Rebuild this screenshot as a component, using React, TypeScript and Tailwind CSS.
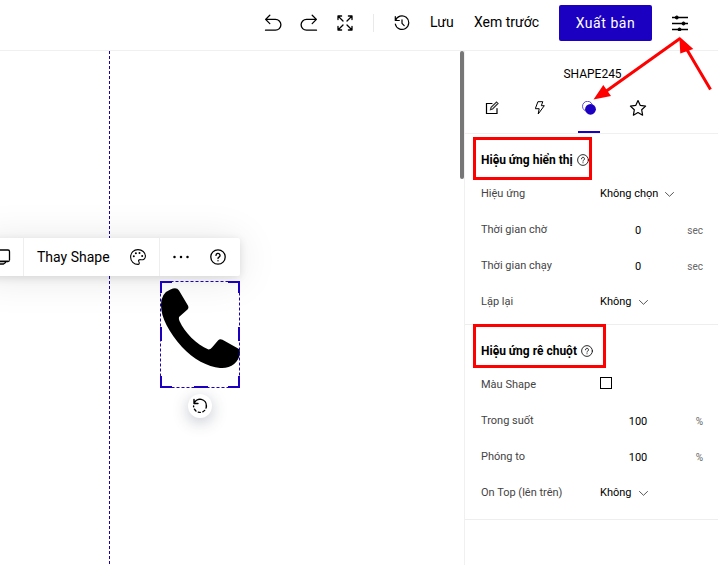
import React from "react";

const line = { fill: "none", stroke: "currentColor", strokeLinecap: "round", strokeLinejoin: "round" } as const;

function HelpIcon({ size, weight = 1.3 }: { size: number; weight?: number }) {
  return (
    <svg width={size} height={size} viewBox="0 0 16 16" {...line} strokeWidth={weight} className="shrink-0">
      <circle cx="8" cy="8" r="7.2" />
      <path d="M6 6.4a2 2 0 1 1 3 1.700c-.7.4-1 .7-1 1.400" />
      <path d="M8 11.600v.2" />
    </svg>
  );
}

function Chevron() {
  return (
    <svg width="9" height="5" viewBox="0 0 9 5" {...line} strokeWidth="0.9" className="mt-px shrink-0 text-[#444]">
      <path d="M.5.5l4 3.800 4-3.800" />
    </svg>
  );
}

function Header() {
  return (
    <header className="flex h-[51px] shrink-0 items-center border-b border-[#f0f0f0] pb-[4px] text-black">
      <svg width="18" height="18" viewBox="0 0 18 18" {...line} strokeWidth="1.300" className="ml-[264px] shrink-0">
        <path d="M5.800 1.200 1.600 5.400l4.200 4.200M1.800 5.400H11.500a5 5 0 0 1 0 10.800H1.500" />
      </svg>
      <svg width="18" height="18" viewBox="0 0 18 18" {...line} strokeWidth="1.300" className="ml-[18px] shrink-0">
        <path d="M12.200 1.200l4.200 4.200-4.200 4.200M16.200 5.400H6.500a5 5 0 0 0 0 10.800H16.500" />
      </svg>
      <svg width="16" height="16" viewBox="0 0 16 16" {...line} strokeWidth="1.300" className="ml-[19px] shrink-0">
        <path d="M1 4.600V1h3.600M1 1l5 5M11.400 1H15v3.600M15 1l-5 5M1 11.400V15h3.600M1 15l5-5M11.400 15H15v-3.600M15 15l-5-5" />
      </svg>
      <div className="ml-[20px] h-[18px] w-px bg-[#e9e9e9]" />
      <svg width="16" height="16" viewBox="0 0 16 16" {...line} strokeWidth="1.200" className="ml-[20px] shrink-0">
        <path d="M1.500 5.500A6.800 6.800 0 1 1 1.300 9M1.300 1.500v4h4M8 4.800v3.500l2.200 2.300" />
      </svg>
      <span className="ml-[20px] w-[44px] pb-[2px] text-[14px]">Lưu</span>
      <span className="w-[85px] pb-[2px] text-[14px] whitespace-nowrap">Xem trước</span>
      <button className="h-[36px] w-[93px] rounded-[2px] bg-[#1c00c2] text-[14px] tracking-[0.55px] whitespace-nowrap text-white">Xuất bản</button>
      <svg width="16" height="16" viewBox="0 0 16 16" className="ml-[20px] shrink-0" fill="currentColor" stroke="currentColor">
        <path d="M0 2.500h16M0 8.500h16M0 14.500h16" strokeWidth="1.300" />
        <circle cx="4.800" cy="2.500" r="1.500" />
        <circle cx="11.500" cy="8.500" r="1.500" />
        <circle cx="7.500" cy="14.500" r="1.500" />
      </svg>
    </header>
  );
}

function ShapeToolbar() {
  return (
    <div className="absolute top-[187px] left-[-20px] flex h-[38px] w-[260px] items-center rounded-[2px] bg-white shadow-[0_2px_8px_rgba(0,0,0,0.12),0_2px_40px_rgba(0,0,0,0.1)]">
      <svg width="20" height="18" viewBox="0 0 20 18" {...line} strokeWidth="1.300" className="ml-[11px] shrink-0">
        <rect x="1" y="2" width="17.500" height="11.500" rx="1.500" />
        <path d="M3 16h9.500l2-1.500" />
        <path d="M1 12.500h17" stroke="#888" strokeWidth="1" />
      </svg>
      <div className="ml-[12px] h-full w-px bg-[#eee]" />
      <span className="w-[93px] pl-[13px] text-[14px] whitespace-nowrap">Thay Shape</span>
      <svg width="16" height="16" viewBox="0 0 16 16" {...line} strokeWidth="1.100" className="ml-[13px] shrink-0">
        <path d="M8 15.400C3.900 15.400.6 12.300.6 8S3.900.6 8 .6s7.400 2.800 7.400 6.600c0 2.800-2.300 4-4.500 3.500-1.700-.4-2.800.5-2.100 1.900.8 1.400.5 2.800-.8 2.800Z" />
        <g fill="currentColor" stroke="none">
          <circle cx="3.800" cy="7.200" r="1" />
          <circle cx="5.900" cy="4.200" r="1" />
          <circle cx="9.500" cy="3.900" r="1" />
          <circle cx="12.200" cy="6.900" r="1" />
        </g>
      </svg>
      <div className="ml-[13px] h-full w-px bg-[#eee]" />
      <svg width="16" height="4" viewBox="0 0 16 4" className="ml-[13px] shrink-0" fill="currentColor">
        <circle cx="1.500" cy="2" r="1.250" /><circle cx="8" cy="2" r="1.250" /><circle cx="14.500" cy="2" r="1.250" />
      </svg>
      <span className="ml-[21px]"><HelpIcon size={16} /></span>
    </div>
  );
}

function SelectedShape() {
  return (
    <svg className="absolute top-[230px] left-[160px]" width="80" height="107" viewBox="0 0 80 107">
      <path d="M10.500 8.500 Q16.500 5.500 19 9.500 L28.200 25 Q29 27 27.500 28.500 L19 36 Q18.500 38 19.500 40 C25 52 36 63 48.500 68.500 Q50.500 68.500 52 66.500 L58 59.500 Q60 57.300 62.500 58.800 L79 68 Q80 69 80 72 C79 82 70 88 60 87 C48 86 33 78 22 66 C9 51 1 37 1 24 Q1 12 10.500 8.500Z" />
      <rect x=".5" y=".5" width="79" height="106" fill="none" stroke="#1c00c2" strokeDasharray="3 2" />
      <path d="M1 12V1H12M68 1H79V12M79 95V106H68M12 106H1V95M1 46V60M79 46V60M34 106H48" fill="none" stroke="#1c00c2" strokeWidth="2" />
    </svg>
  );
}

function Canvas() {
  return (
    <main className="relative w-[460px] shrink-0 overflow-hidden text-black">
      <svg className="absolute top-0 left-[109px]" width="1" height="514">
        <path d="M.5 0V514" stroke="#1c00a8" strokeDasharray="3 2" />
      </svg>
      <ShapeToolbar />
      <SelectedShape />
      <div className="absolute top-[343px] left-[188px] flex size-[24px] items-center justify-center rounded-full bg-white shadow-[0_4px_16px_rgba(40,50,80,0.28)]">
        <svg width="16" height="16" viewBox="0 0 16 16" {...line} strokeWidth="1.400">
          <path d="M2 1.500v4h4M2 5.500A6.400 6.400 0 0 1 14.400 8" />
          <path d="M14.400 8A6.400 6.400 0 1 1 1.600 8" strokeDasharray="2.200 2.500" />
        </svg>
      </div>
    </main>
  );
}

type RowProps = { label: string; value?: string; unit?: string; swatch?: boolean };

function Row({ label, value, unit, swatch }: RowProps) {
  return (
    <div className="flex h-[36px] items-center pl-[16px] text-[11px]">
      <span className="w-[119px] shrink-0 whitespace-nowrap text-[#444]">{label}</span>
      {swatch ? (
        <span className="mb-[4px] size-[12px] border border-black" />
      ) : unit ? (
        <>
          <span className="w-[76px] pt-[2px] text-center text-black">{value}</span>
          <span className="w-[27px] pt-px text-right text-[10px] text-[#666]">{unit}</span>
        </>
      ) : (
        <span className="flex items-center gap-[7px] text-black">{value}<Chevron /></span>
      )}
    </div>
  );
}

function Heading({ children, mark }: { children: string; mark: string }) {
  return (
    <div className="relative flex h-[33px] items-center gap-[4px] pl-[16px] text-[12px] font-bold text-black">
      {children}
      <HelpIcon size={12} weight={1.1} />
      <div className={`absolute border-[3px] border-[#ff0000] ${mark}`} />
    </div>
  );
}

function Tabs() {
  return (
    <nav className="flex h-[48px] items-center border-b border-[#f0f0f0] text-black">
      <span className="mb-[3px] ml-[11px] flex w-[32px] justify-center">
        <svg width="14" height="14" viewBox="0 0 14 14" {...line} strokeWidth="1.200" strokeLinejoin="miter">
          <path d="M7 2.500H1.500v10h10.500V7.500" /><path d="m5.500 8.700.6-2.300L11.500 1l1.500 1.500-5.400 5.500Z" strokeWidth="1.200" stroke="#333" />
        </svg>
      </span>
      <span className="mb-[4px] ml-[16px] flex w-[32px] justify-center">
        <svg width="10" height="14" viewBox="0 0 10 14" {...line} strokeWidth="1">
          <path d="M3.300.7h4.500L6.300 4.700h3L3.200 13l1-5.300H.7Z" />
        </svg>
      </span>
      <span className="relative ml-[22px] flex h-full w-[22px] items-center justify-center pb-[3px]">
        <svg width="14" height="14" viewBox="0 0 14 14">
          <circle cx="5.500" cy="5.300" r="5" fill="none" stroke="#1c00c2" strokeWidth=".7" />
          <circle cx="8.500" cy="8.300" r="5.400" fill="#1c00c2" />
        </svg>
        <i className="absolute bottom-0 left-0 h-[2px] w-full bg-[#1c00c2]" />
      </span>
      <svg width="18" height="18" viewBox="0 0 18 18" {...line} strokeWidth="1.200" className="mb-[3px] ml-[29px]">
        <path d="m9 1.500 2.300 4.900 5.300.7-3.900 3.700.9 5.400L9 13.600l-4.600 2.600.9-5.400-3.900-3.700 5.300-.7Z" />
      </svg>
    </nav>
  );
}

export default function App() {
  return (
    <div className="relative flex h-[565px] w-[718px] flex-col overflow-hidden bg-white font-['Roboto',sans-serif]">
      <Header />
      <div className="flex flex-1">
        <Canvas />
        <div className="h-[128px] w-[4px] shrink-0 rounded-[2px] bg-[#777]" />
        <aside className="flex flex-1 flex-col border-l border-[#f0f0f0]">
          <div className="flex h-[35px] items-end justify-center pb-[3px] pl-[2px] text-[12px] text-black">SHAPE245</div>
          <Tabs />
          <section className="border-b border-[#eee] pt-[9px] pb-[4px]">
            <Heading mark="top-[-6px] left-[8px] h-[43px] w-[119px]">Hiệu ứng hiển thị</Heading>
            <Row label="Hiệu ứng" value="Không chọn" />
            <Row label="Thời gian chờ" value="0" unit="sec" />
            <Row label="Thời gian chạy" value="0" unit="sec" />
            <Row label="Lặp lại" value="Không" />
          </section>
          <section className="border-b border-[#eee] pt-[9px] pb-[8px]">
            <Heading mark="top-[-10px] left-[8px] h-[44px] w-[133px]">Hiệu ứng rê chuột</Heading>
            <Row label="Màu Shape" swatch />
            <Row label="Trong suốt" value="100" unit="%" />
            <Row label="Phóng to" value="100" unit="%" />
            <Row label="On Top (lên trên)" value="Không" />
          </section>
        </aside>
      </div>
      <svg className="absolute inset-0" width="718" height="565" fill="#ff0000" stroke="#ff0000">
        <path d="M680 38.500 605 92M683 43l27.500 46.500" fill="none" strokeWidth="3" />
        <path d="m593.500 99.500 9.800-14.500 7.700 11ZM679.300 36.500l14 12.500-13 4.500Z" stroke="none" />
      </svg>
    </div>
  );
}
